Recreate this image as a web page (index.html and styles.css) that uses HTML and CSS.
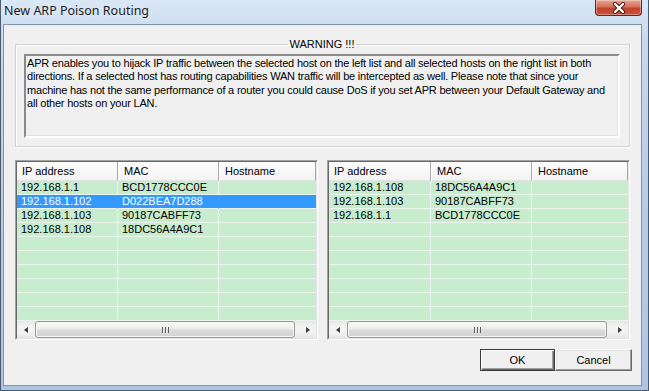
FILE: index.html
```html
<!DOCTYPE html>
<html lang="en">
<head>
    <meta charset="UTF-8">
    <title>New ARP Poison Routing</title>
    <link rel="stylesheet" href="styles.css">
</head>
<body>
    <div class="window">
        <div class="titlebar">
            <span class="title">New ARP Poison Routing</span>
            <button class="close-button">
                <svg width="14" height="12" viewBox="0 0 14 12">
                    <path d="M3 2 L11 10 M11 2 L3 10" stroke="#4a1a12" stroke-width="4.2" stroke-linecap="round"/>
                    <path d="M3 2 L11 10 M11 2 L3 10" stroke="#fff" stroke-width="2.4" stroke-linecap="round"/>
                </svg>
            </button>
        </div>

        <div class="client">
            <fieldset class="warning">
                <legend>WARNING !!!</legend>
                <div class="warning-text">
                    APR enables you to hijack IP traffic between the selected host on the left list and all selected hosts on the right list in both<br>
                    directions. If a selected host has routing capabilities WAN traffic will be intercepted as well. Please note that since your<br>
                    machine has not the same performance of a router you could cause DoS if you set APR between your Default Gateway and<br>
                    all other hosts on your LAN.
                </div>
            </fieldset>

            <div class="lists">
                <!-- left list: host to poison -->
                <div class="list">
                    <div class="list-inner">
                        <table class="hosts">
                            <colgroup><col class="col-ip"><col class="col-mac"><col></colgroup>
                            <thead>
                                <tr><th>IP address</th><th>MAC</th><th>Hostname</th></tr>
                            </thead>
                            <tbody>
                                <tr><td>192.168.1.1</td><td>BCD1778CCC0E</td><td></td></tr>
                                <tr class="selected"><td>192.168.1.102</td><td>D022BEA7D288</td><td></td></tr>
                                <tr><td>192.168.1.103</td><td>90187CABFF73</td><td></td></tr>
                                <tr><td>192.168.1.108</td><td>18DC56A4A9C1</td><td></td></tr>
                                <tr><td></td><td></td><td></td></tr>
                                <tr><td></td><td></td><td></td></tr>
                                <tr><td></td><td></td><td></td></tr>
                                <tr><td></td><td></td><td></td></tr>
                                <tr><td></td><td></td><td></td></tr>
                                <tr><td></td><td></td><td></td></tr>
                            </tbody>
                        </table>
                        <div class="hscroll">
                            <span class="arrow arrow-left"></span>
                            <div class="track"><div class="thumb"><span class="grip"></span></div></div>
                            <span class="arrow arrow-right"></span>
                        </div>
                    </div>
                </div>

                <!-- right list: other hosts -->
                <div class="list">
                    <div class="list-inner">
                        <table class="hosts">
                            <colgroup><col class="col-ip wide"><col class="col-mac"><col></colgroup>
                            <thead>
                                <tr><th>IP address</th><th>MAC</th><th>Hostname</th></tr>
                            </thead>
                            <tbody>
                                <tr><td>192.168.1.108</td><td>18DC56A4A9C1</td><td></td></tr>
                                <tr><td>192.168.1.103</td><td>90187CABFF73</td><td></td></tr>
                                <tr><td>192.168.1.1</td><td>BCD1778CCC0E</td><td></td></tr>
                                <tr><td></td><td></td><td></td></tr>
                                <tr><td></td><td></td><td></td></tr>
                                <tr><td></td><td></td><td></td></tr>
                                <tr><td></td><td></td><td></td></tr>
                                <tr><td></td><td></td><td></td></tr>
                                <tr><td></td><td></td><td></td></tr>
                                <tr><td></td><td></td><td></td></tr>
                            </tbody>
                        </table>
                        <div class="hscroll">
                            <span class="arrow arrow-left"></span>
                            <div class="track"><div class="thumb"><span class="grip"></span></div></div>
                            <span class="arrow arrow-right"></span>
                        </div>
                    </div>
                </div>
            </div>

            <div class="buttons">
                <button class="btn btn-default">OK</button>
                <button class="btn btn-cancel">Cancel</button>
            </div>
        </div>
    </div>
</body>
</html>
```

FILE: styles.css
```css
body {
    margin: 0;
    width: 649px;
    height: 391px;
    overflow: hidden;
    font-family: "Liberation Sans", Arial, sans-serif;
    font-size: 11px;
    color: #000;
}

.window {
    box-sizing: border-box;
    width: 649px;
    height: 391px;
    border: 1px solid #4a5a6c;
    border-top: 0;
    padding: 0 6px 4px 2px;
    background: linear-gradient(to bottom, #d9e7f6, #c6d9ef 40px, #b7cde6 200px, #aec6e2);
}

.titlebar {
    height: 24px;
    display: flex;
    justify-content: space-between;
    align-items: flex-start;
}

.title {
    padding-left: 1px;
    line-height: 21px;
    font-family: "Noto Sans", "Open Sans", sans-serif;
    font-size: 12.5px;
    color: #1b1b1b;
    text-shadow: 0 0 6px #eef5fc;
}

.close-button {
    width: 47px;
    height: 16px;
    padding: 0;
    border: 1px solid #6b2318;
    border-top: 0;
    border-radius: 0 0 4px 4px;
    background: linear-gradient(to bottom, #e8a593, #d5725d 45%, #c2432c 55%, #c8513a);
    box-shadow: inset 0 0 0 1px rgba(255, 255, 255, 0.35);
    display: flex;
    justify-content: center;
    align-items: center;
}

.client {
    box-sizing: border-box;
    height: 362px;
    border: 1px solid #7f93a9;
    background: #f0f0f0;
}

/* Group box */
.warning {
    margin: 13px 11px 0;
    padding: 3px 9px 8px 8px;
    border: 1px solid #cdd1d4;
    box-shadow: inset 1px 1px 0 #fff, 1px 1px 0 #fff;
    min-inline-size: 0;
}

.warning legend {
    margin: 0 auto;
    padding: 0 2px;
    line-height: 13px;
}

.warning-text {
    height: 84px;
    box-sizing: border-box;
    padding: 1px 1px;
    border: 2px solid;
    border-color: #8a8a8a #fff #fff #8a8a8a;
    box-shadow: inset -1px -1px 0 #e3e3e3;
    line-height: 13.3px;
    letter-spacing: -0.2px;
    white-space: nowrap;
    overflow: hidden;
}

/* Host lists */
.lists {
    display: flex;
    gap: 9px;
    margin: 13px 11px 0;
}

.list {
    flex: 1;
    border: 1px solid;
    border-color: #a0a0a0 #fff #fff #a0a0a0;
}

.list-inner {
    border: 1px solid;
    border-color: #696969 #e3e3e3 #e3e3e3 #696969;
    background: #c8ecce;
}

.hosts {
    width: 100%;
    table-layout: fixed;
    border-collapse: separate;
    border-spacing: 0;
}

.col-ip { width: 101px; }
.col-ip.wide { width: 102px; }
.col-mac { width: 101px; }

.hosts th {
    height: 18px;
    padding: 0 5px;
    text-align: left;
    font-weight: normal;
    background: linear-gradient(to bottom, #fdfdfd, #f3f3f3);
    border-right: 1px solid #a8a8a8;
    border-left: 1px solid #fff;
    border-bottom: 1px solid #e2e2e2;
    white-space: nowrap;
    overflow: hidden;
}

.hosts th:first-child {
    border-left: 0;
}

.hosts td {
    height: 13px;
    padding: 0 4px;
    line-height: 13px;
    border-bottom: 1px solid #eaf6ec;
    border-right: 1px solid #eaf6ec;
    white-space: nowrap;
    overflow: hidden;
}

.hosts td:last-child {
    border-right: 0;
}

.hosts tr.selected td {
    background: #3399ff;
    color: #fff;
    border-right-color: #3399ff;
}

/* Horizontal scroll bar */
.hscroll {
    display: flex;
    height: 17px;
    background: linear-gradient(to bottom, #e6e6e6, #f2f2f2 30%, #f2f2f2 70%, #e6e6e6);
}

.arrow {
    width: 17px;
    display: flex;
    justify-content: center;
    align-items: center;
}

.arrow::before {
    content: "";
    border-top: 3px solid transparent;
    border-bottom: 3px solid transparent;
}

.arrow-left::before {
    border-right: 4px solid #3c3c3c;
}

.arrow-right::before {
    border-left: 4px solid #3c3c3c;
}

.track {
    flex: 1;
    display: flex;
    padding: 0 4px 0 1px;
}

.thumb {
    flex: 1;
    border: 1px solid #979797;
    border-radius: 3px;
    background: linear-gradient(to bottom, #f8f8f8, #ececec 45%, #dadada 55%, #d2d2d2);
    box-shadow: inset 0 0 0 1px #f9f9f9;
    display: flex;
    justify-content: center;
    align-items: center;
}

.grip {
    width: 7px;
    height: 6px;
    background: repeating-linear-gradient(to right, #5e5e5e 0, #5e5e5e 1px, #e8e8e8 1px, #e8e8e8 2px, transparent 2px, transparent 3px);
}

/* Dialog buttons */
.buttons {
    display: flex;
    justify-content: flex-end;
    margin: 9px 9px 0 0;
}

.btn {
    height: 22px;
    padding: 0;
    font-family: "Liberation Sans", Arial, sans-serif;
    font-size: 11px;
    color: #000;
    background: #f0f0f0;
    border: 1px solid;
    border-color: #fff #696969 #696969 #fff;
    box-shadow: inset -1px -1px 0 #a0a0a0, inset 1px 1px 0 #e3e3e3;
}

.btn-default {
    width: 75px;
    border: 1px solid #3a3a3a;
    box-shadow: inset 1px 1px 0 #fff, inset -1px -1px 0 #696969, inset -2px -2px 0 #a0a0a0;
}

.btn-cancel {
    width: 77px;
}
```
